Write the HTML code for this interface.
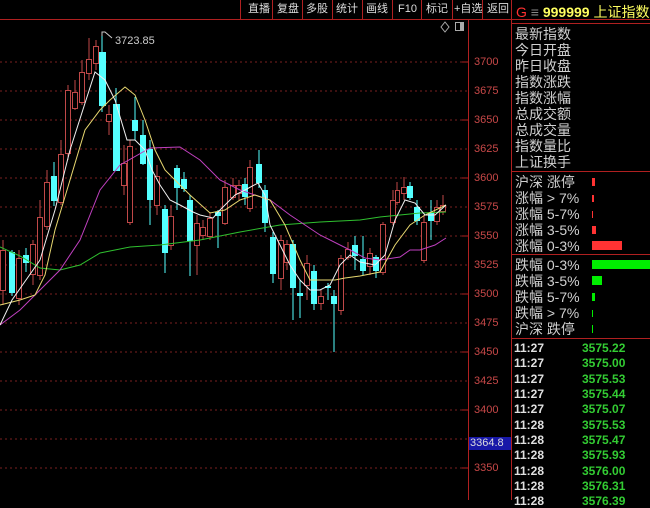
<!DOCTYPE html>
<html><head><meta charset="utf-8"><style>
body{margin:0;background:#000;width:650px;height:500px;overflow:hidden;font-family:"Liberation Sans","Noto Sans CJK SC",sans-serif;position:relative}
.tb{position:absolute;top:0;height:19px;color:#ddd;font-size:11px;line-height:19px}
.r{position:absolute;left:515px;color:#d0d0d0;font-size:14px;line-height:16px;white-space:nowrap}
.lbl{position:absolute;left:474px;color:#c84848;font-size:11px}
.t{position:absolute;left:514px;color:#e0e0e0;font-size:12px;font-weight:bold}
.p{position:absolute;left:582px;color:#33cc33;font-size:12px;font-weight:bold}
</style></head><body>
<svg width="650" height="500" style="position:absolute;left:0;top:0">
<g stroke="#7a2020" stroke-dasharray="2,3" stroke-width="1">
<line x1="0" x2="468" y1="62" y2="62"/><line x1="0" x2="468" y1="91" y2="91"/><line x1="0" x2="468" y1="120" y2="120"/><line x1="0" x2="468" y1="149" y2="149"/><line x1="0" x2="468" y1="178" y2="178"/><line x1="0" x2="468" y1="207" y2="207"/><line x1="0" x2="468" y1="236" y2="236"/><line x1="0" x2="468" y1="265" y2="265"/><line x1="0" x2="468" y1="294" y2="294"/><line x1="0" x2="468" y1="323" y2="323"/><line x1="0" x2="468" y1="352" y2="352"/><line x1="0" x2="468" y1="381" y2="381"/><line x1="0" x2="468" y1="410" y2="410"/><line x1="0" x2="468" y1="439" y2="439"/><line x1="0" x2="468" y1="468" y2="468"/>
</g>
<line x1="468.5" y1="20" x2="468.5" y2="500" stroke="#b02020"/>
<line x1="511.5" y1="0" x2="511.5" y2="500" stroke="#b02020"/>
<line x1="0" y1="19.5" x2="650" y2="19.5" stroke="#b02020"/>
<line x1="511" y1="23.5" x2="650" y2="23.5" stroke="#b02020"/>
<line x1="511" y1="171.5" x2="650" y2="171.5" stroke="#b02020"/>
<line x1="511" y1="254.5" x2="650" y2="254.5" stroke="#b02020"/>
<line x1="511" y1="338.5" x2="650" y2="338.5" stroke="#b02020"/>
<g stroke="#b02020"><line x1="240.5" y1="0" x2="240.5" y2="19"/><line x1="272.5" y1="0" x2="272.5" y2="19"/><line x1="302.5" y1="0" x2="302.5" y2="19"/><line x1="332.5" y1="0" x2="332.5" y2="19"/><line x1="362.5" y1="0" x2="362.5" y2="19"/><line x1="392.5" y1="0" x2="392.5" y2="19"/><line x1="421.5" y1="0" x2="421.5" y2="19"/><line x1="452.5" y1="0" x2="452.5" y2="19"/><line x1="482.5" y1="0" x2="482.5" y2="19"/></g>
<path d="M445 22l4 5-4 5-4-5z" fill="none" stroke="#aaa"/>
<rect x="455.5" y="22.5" width="8" height="8" fill="none" stroke="#aaa"/><rect x="460" y="23" width="3" height="7" fill="#aaa"/>
<g stroke="#c04848" fill="#000" stroke-width="1">
<line x1="3" y1="240" x2="3" y2="305"/><rect x="0.5" y="250.5" width="5" height="40"/>
<line x1="19" y1="250" x2="19" y2="305"/><rect x="16.5" y="258.5" width="5" height="40"/>
<line x1="33" y1="240" x2="33" y2="285"/><rect x="30.5" y="244.5" width="5" height="30"/>
<line x1="40" y1="200" x2="40" y2="280"/><rect x="37.5" y="217.5" width="5" height="58"/>
<line x1="47" y1="170" x2="47" y2="230"/><rect x="44.5" y="182.5" width="5" height="44"/>
<line x1="61" y1="140" x2="61" y2="205"/><rect x="58.5" y="154.5" width="5" height="48"/>
<line x1="68" y1="85" x2="68" y2="160"/><rect x="65.5" y="90.5" width="5" height="63"/>
<line x1="75" y1="80" x2="75" y2="110"/><rect x="72.5" y="92.5" width="5" height="16"/>
<line x1="82" y1="60" x2="82" y2="105"/><rect x="79.5" y="72.5" width="5" height="30"/>
<line x1="89" y1="38" x2="89" y2="80"/><rect x="86.5" y="59.5" width="5" height="14"/>
<line x1="96" y1="40" x2="96" y2="70"/><rect x="93.5" y="46.5" width="5" height="17"/>
<line x1="109" y1="105" x2="109" y2="135"/><rect x="106.5" y="114.5" width="5" height="7"/>
<line x1="124" y1="145" x2="124" y2="195"/><rect x="121.5" y="163.5" width="5" height="22"/>
<line x1="130" y1="140" x2="130" y2="225"/><rect x="127.5" y="146.5" width="5" height="76"/>
<line x1="157" y1="165" x2="157" y2="215"/><rect x="154.5" y="176.5" width="5" height="29"/>
<line x1="171" y1="205" x2="171" y2="250"/><rect x="168.5" y="216.5" width="5" height="29"/>
<line x1="197" y1="215" x2="197" y2="275"/><rect x="194.5" y="223.5" width="5" height="22"/>
<line x1="203" y1="220" x2="203" y2="240"/><rect x="200.5" y="227.5" width="5" height="8"/>
<line x1="210" y1="212" x2="210" y2="240"/><rect x="207.5" y="218.5" width="5" height="18"/>
<line x1="225" y1="180" x2="225" y2="225"/><rect x="222.5" y="187.5" width="5" height="36"/>
<line x1="233" y1="178" x2="233" y2="200"/><rect x="230.5" y="185.5" width="5" height="12"/>
<line x1="239" y1="180" x2="239" y2="200"/><rect x="236.5" y="185.5" width="5" height="8"/>
<line x1="250" y1="160" x2="250" y2="212"/><rect x="247.5" y="167.5" width="5" height="41"/>
<line x1="281" y1="235" x2="281" y2="290"/><rect x="278.5" y="240.5" width="5" height="38"/>
<line x1="287" y1="240" x2="287" y2="270"/><rect x="284.5" y="244.5" width="5" height="18"/>
<line x1="307" y1="255" x2="307" y2="300"/><rect x="304.5" y="263.5" width="5" height="22"/>
<line x1="321" y1="290" x2="321" y2="310"/><rect x="318.5" y="296.5" width="5" height="7"/>
<line x1="341" y1="255" x2="341" y2="315"/><rect x="338.5" y="258.5" width="5" height="52"/>
<line x1="348" y1="242" x2="348" y2="260"/><rect x="345.5" y="249.5" width="5" height="8"/>
<line x1="370" y1="248" x2="370" y2="275"/><rect x="367.5" y="253.5" width="5" height="13"/>
<line x1="383" y1="222" x2="383" y2="275"/><rect x="380.5" y="224.5" width="5" height="48"/>
<line x1="393" y1="190" x2="393" y2="225"/><rect x="390.5" y="200.5" width="5" height="22"/>
<line x1="397" y1="182" x2="397" y2="205"/><rect x="395.5" y="190.5" width="4" height="12"/>
<line x1="404" y1="177" x2="404" y2="200"/><rect x="401.5" y="187.5" width="5" height="6"/>
<line x1="424" y1="215" x2="424" y2="263"/><rect x="421.5" y="222.5" width="5" height="38"/>
<line x1="437" y1="200" x2="437" y2="225"/><rect x="434.5" y="207.5" width="5" height="14"/>
<line x1="443" y1="195" x2="443" y2="215"/><rect x="440.5" y="205.5" width="5" height="6"/>
</g>
<g stroke="#54ffff" fill="#54ffff">
<line x1="12" y1="250" x2="12" y2="296"/><rect x="9.5" y="252.5" width="5" height="40"/>
<line x1="26" y1="248" x2="26" y2="272"/><rect x="23.5" y="255.5" width="5" height="7"/>
<line x1="54" y1="162" x2="54" y2="206"/><rect x="51.5" y="176.5" width="5" height="24"/>
<line x1="102" y1="36" x2="102" y2="112"/><rect x="99.5" y="52.5" width="6" height="53"/>
<line x1="116" y1="88" x2="116" y2="170"/><rect x="113.5" y="104.5" width="6" height="66"/>
<line x1="135" y1="97" x2="135" y2="140"/><rect x="132.5" y="120.5" width="5" height="10"/>
<line x1="143" y1="120" x2="143" y2="165"/><rect x="140.5" y="135.5" width="5" height="28"/>
<line x1="150" y1="140" x2="150" y2="225"/><rect x="147.5" y="149.5" width="5" height="50"/>
<line x1="165" y1="205" x2="165" y2="273"/><rect x="162.5" y="209.5" width="5" height="43"/>
<line x1="177" y1="165" x2="177" y2="210"/><rect x="174.5" y="168.5" width="5" height="19"/>
<line x1="184" y1="172" x2="184" y2="192"/><rect x="181.5" y="179.5" width="5" height="9"/>
<line x1="190" y1="195" x2="190" y2="276"/><rect x="187.5" y="200.5" width="5" height="40"/>
<line x1="218" y1="210" x2="218" y2="248"/><rect x="215.5" y="212.5" width="5" height="3"/>
<line x1="245" y1="178" x2="245" y2="205"/><rect x="242.5" y="184.5" width="5" height="12"/>
<line x1="259" y1="150" x2="259" y2="188"/><rect x="256.5" y="164.5" width="5" height="18"/>
<line x1="265" y1="185" x2="265" y2="232"/><rect x="262.5" y="190.5" width="5" height="32"/>
<line x1="273" y1="232" x2="273" y2="283"/><rect x="270.5" y="237.5" width="5" height="36"/>
<line x1="293" y1="240" x2="293" y2="320"/><rect x="290.5" y="244.5" width="5" height="43"/>
<line x1="300" y1="280" x2="300" y2="318"/><rect x="297.5" y="293.5" width="5" height="2"/>
<line x1="314" y1="265" x2="314" y2="310"/><rect x="311.5" y="271.5" width="5" height="32"/>
<line x1="328" y1="283" x2="328" y2="300"/><rect x="325.5" y="286.5" width="5" height="1"/>
<line x1="334" y1="290" x2="334" y2="352"/><rect x="331.5" y="296.5" width="5" height="7"/>
<line x1="355" y1="236" x2="355" y2="270"/><rect x="352.5" y="245.5" width="5" height="10"/>
<line x1="363" y1="236" x2="363" y2="275"/><rect x="360.5" y="259.5" width="5" height="11"/>
<line x1="376" y1="255" x2="376" y2="278"/><rect x="373.5" y="257.5" width="5" height="13"/>
<line x1="410" y1="182" x2="410" y2="200"/><rect x="407.5" y="186.5" width="5" height="11"/>
<line x1="417" y1="200" x2="417" y2="225"/><rect x="414.5" y="207.5" width="5" height="13"/>
<line x1="431" y1="200" x2="431" y2="240"/><rect x="428.5" y="213.5" width="5" height="7"/>
</g>
<g fill="none" stroke-width="1">
<polyline stroke="#2fc02f" points="0,247 20,256 40,268 60,270 80,265 100,253 130,247 160,245 200,240 240,232 280,225 320,222 360,220 380,217 400,215 420,213 446,212"/>
<polyline stroke="#c040c0" points="0,325 20,310 40,290 60,270 80,240 100,190 120,165 150,148 180,147 200,160 220,180 240,190 270,200 290,215 320,235 350,250 365,258 380,260 400,257 410,250 420,250 435,245 446,238"/>
<polyline stroke="#e8d870" points="0,305 20,300 35,295 45,275 55,230 70,180 85,130 100,110 110,100 125,87 135,95 145,120 155,150 165,170 175,180 190,195 210,213 225,210 240,200 255,195 270,200 285,225 300,260 310,280 320,280 335,280 345,278 360,276 380,272 395,245 410,225 425,215 446,205"/>
<polyline stroke="#f0f0f0" points="0,325 12,300 40,260 55,210 70,150 95,72 105,80 115,100 127,140 135,140 145,150 152,170 160,185 170,200 180,205 193,212 200,215 213,218 220,210 235,195 245,190 258,183 265,195 270,225 280,245 290,265 300,280 310,290 320,290 330,285 340,265 350,255 360,262 375,265 385,255 395,220 405,200 415,203 425,215 435,215 446,205"/>
<path d="M102 36v-4h3l7 6" stroke="#ccc"/>
</g>
<g stroke="#b02020"><line x1="462" x2="468" y1="62" y2="62"/><line x1="462" x2="468" y1="120" y2="120"/><line x1="462" x2="468" y1="178" y2="178"/><line x1="462" x2="468" y1="236" y2="236"/><line x1="462" x2="468" y1="294" y2="294"/><line x1="462" x2="468" y1="352" y2="352"/><line x1="462" x2="468" y1="410" y2="410"/><line x1="462" x2="468" y1="468" y2="468"/></g>
<rect x="469" y="437" width="42" height="13" fill="#1818a8"/>
<rect x="592" y="178" width="3" height="8" fill="#ff3333"/><rect x="592" y="195" width="2" height="7" fill="#ff3333"/><rect x="592" y="211" width="1" height="7" fill="#ff3333"/><rect x="592" y="226" width="4" height="8" fill="#ff3333"/><rect x="592" y="241" width="30" height="9" fill="#ff3333"/>
<rect x="592" y="260" width="58" height="9" fill="#00ee00"/><rect x="592" y="276" width="10" height="9" fill="#00ee00"/><rect x="592" y="293" width="3" height="8" fill="#00ee00"/><rect x="592" y="310" width="1" height="7" fill="#00ee00"/><rect x="592" y="325" width="1" height="8" fill="#00ee00"/>
</svg>
<div class="tb" style="left:248px">直播</div><div class="tb" style="left:277px">复盘</div><div class="tb" style="left:306px">多股</div><div class="tb" style="left:336px">统计</div><div class="tb" style="left:366px">画线</div><div class="tb" style="left:398px">F10</div><div class="tb" style="left:426px">标记</div><div class="tb" style="left:454px">+自选</div><div class="tb" style="left:487px">返回</div>
<div style="position:absolute;left:516px;top:2px;font-size:14px;white-space:nowrap"><span style="color:#ff3030">G</span> <span style="color:#888">≡</span> <span style="color:#ffff60;font-weight:bold">999999</span> <span style="color:#ffff60">上证指数</span></div>
<div style="position:absolute;left:115px;top:35px;color:#ccc;font-size:11px">3723.85</div>
<div class="r" style="top:26px">最新指数<br>今日开盘<br>昨日收盘<br>指数涨跌<br>指数涨幅<br>总成交额<br>总成交量<br>指数量比<br>上证换手</div>
<div class="r" style="top:174px">沪深 涨停<br>涨幅 &gt; 7%<br>涨幅 5-7%<br>涨幅 3-5%<br>涨幅 0-3%</div>
<div class="r" style="top:257px">跌幅 0-3%<br>跌幅 3-5%<br>跌幅 5-7%<br>跌幅 &gt; 7%<br>沪深 跌停</div>
<div class="lbl" style="top:56px">3700</div><div class="lbl" style="top:85px">3675</div><div class="lbl" style="top:114px">3650</div><div class="lbl" style="top:143px">3625</div><div class="lbl" style="top:172px">3600</div><div class="lbl" style="top:201px">3575</div><div class="lbl" style="top:230px">3550</div><div class="lbl" style="top:259px">3525</div><div class="lbl" style="top:288px">3500</div><div class="lbl" style="top:317px">3475</div><div class="lbl" style="top:346px">3450</div><div class="lbl" style="top:375px">3425</div><div class="lbl" style="top:404px">3400</div><div class="lbl" style="top:462px">3350</div>
<div style="position:absolute;left:470px;top:437px;color:#ddd;font-size:11px">3364.8</div>
<div class="t" style="top:341px">11:27</div><div class="p" style="top:341px">3575.22</div>
<div class="t" style="top:356px">11:27</div><div class="p" style="top:356px">3575.00</div>
<div class="t" style="top:372px">11:27</div><div class="p" style="top:372px">3575.53</div>
<div class="t" style="top:387px">11:27</div><div class="p" style="top:387px">3575.44</div>
<div class="t" style="top:402px">11:27</div><div class="p" style="top:402px">3575.07</div>
<div class="t" style="top:418px">11:28</div><div class="p" style="top:418px">3575.53</div>
<div class="t" style="top:433px">11:28</div><div class="p" style="top:433px">3575.47</div>
<div class="t" style="top:448px">11:28</div><div class="p" style="top:448px">3575.93</div>
<div class="t" style="top:464px">11:28</div><div class="p" style="top:464px">3576.00</div>
<div class="t" style="top:479px">11:28</div><div class="p" style="top:479px">3576.31</div>
<div class="t" style="top:494px">11:28</div><div class="p" style="top:494px">3576.39</div>
</body></html>
